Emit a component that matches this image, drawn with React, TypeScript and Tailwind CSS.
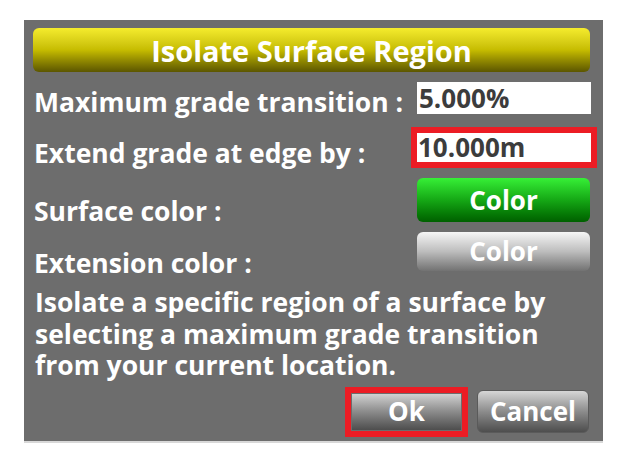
import { FC, ReactNode } from "react";

const font = { fontFamily: '"Open Sans", "DejaVu Sans", sans-serif' };

type RowProps = {
  label: string;
  labelPad: string;
  className: string;
  children: ReactNode;
};

const Row: FC<RowProps> = ({ label, labelPad, className, children }) => (
  <div className={`shrink-0 flex justify-between items-start ${className}`}>
    <div className={`pl-[1px] text-[26.5px] leading-[32px] font-bold text-white whitespace-nowrap ${labelPad}`}>
      {label}
    </div>
    {children}
  </div>
);

const lines = [
  "Isolate a specific region of a surface by",
  "selecting a maximum grade transition",
  "from your current location.",
];

const App: FC = () => {
  return (
    <div className="w-[623px] h-[459px] bg-white pt-[20px] pl-[24px]" style={font}>
      <div className="w-[579px] h-[423px] bg-[#6d6d6d] border-b-2 border-[#d8d8d8] flex flex-col pl-[9px] pr-[12px] pt-[8px]">
        {/* title */}
        <div className="shrink-0 h-[44px] mr-[1px] rounded-[6px] bg-gradient-to-b from-[#f5ec2c] via-[#c6bc00] to-[#5c5600] flex items-center justify-center">
          <span className="text-[29px] font-bold text-white leading-none">
            Isolate Surface Region
          </span>
        </div>

        <Row label="Maximum grade transition :" labelPad="pt-[4px]" className="mt-[10px] h-[32px]">
          <div className="shrink-0 w-[174px] h-[32px] bg-white flex items-center pl-[2px] text-[26px] font-bold text-[#3c3c3c]">
            5.000%
          </div>
        </Row>

        <Row label="Extend grade at edge by :" labelPad="pt-[10px]" className="mt-[13px] h-[41px]">
          <div className="shrink-0 w-[186px] h-[41px] mr-[-6px] border-[6px] border-[#ec1c24] bg-white flex items-center pl-[1px] text-[26px] font-bold text-[#3c3c3c]">
            10.000m
          </div>
        </Row>

        <Row label="Surface color :" labelPad="pt-[17px]" className="mt-[10px] h-[44px]">
          <div className="shrink-0 w-[173px] h-[44px] mr-[1px] rounded-[6px] bg-gradient-to-b from-[#36f036] via-[#15a815] to-[#006000] flex items-center justify-center text-[26px] font-bold text-white">
            Color
          </div>
        </Row>

        <Row label="Extension color :" labelPad="pt-[15px]" className="mt-[10px] h-[39px]">
          <div className="shrink-0 w-[173px] h-[39px] mr-[1px] rounded-[6px] bg-gradient-to-b from-[#f6f6f6] via-[#bdbdbd] to-[#727272] flex items-center justify-center text-[26px] font-bold text-white">
            Color
          </div>
        </Row>

        <div className="shrink-0 mt-[16px] pl-[2px] flex flex-col">
          {lines.map((line, idx) => (
            <div
              key={idx}
              className="h-[31.5px] text-[26.5px] leading-[31.5px] font-bold text-white whitespace-nowrap"
            >
              {line}
            </div>
          ))}
        </div>

        <div className="shrink-0 mt-[5px] flex justify-end items-center gap-[9px] pr-[2px]">
          <div className="w-[123px] h-[50px] border-[6px] border-[#ec1c24] bg-[#6d6d6d] p-[1px]">
            <div className="h-full bg-gradient-to-b from-[#d2d2d2] via-[#8a8a8a] to-[#4e4e4e] flex items-center justify-center text-[26px] font-bold text-white">
              Ok
            </div>
          </div>
          <div className="w-[112px] h-[43px] rounded-[6px] border border-[#5a5a5a] bg-gradient-to-b from-[#d6d6d6] via-[#8c8c8c] to-[#4e4e4e] flex items-center justify-center text-[26px] font-bold text-white">
            Cancel
          </div>
        </div>
      </div>
    </div>
  );
};

export default App;
